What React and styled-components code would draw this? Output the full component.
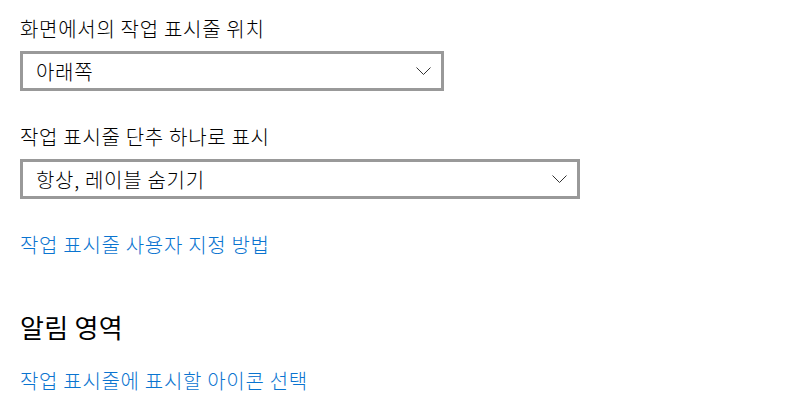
import React from 'react';
import { styled, createGlobalStyle } from 'styled-components';

const GlobalStyle = createGlobalStyle`
  html, body {
    margin: 0;
    padding: 0;
    background: #ffffff;
  }
  body {
    font-family: "Noto Sans CJK KR", "Noto Sans", sans-serif;
    color: #000000;
  }
`;

const Page = styled.div`
  width: 800px;
  height: 400px;
  box-sizing: border-box;
  padding: 19px 0 0 20px;
  display: flex;
  flex-direction: column;
  align-items: flex-start;
`;

const Label = styled.div`
  font-size: 20px;
  font-weight: 300;
  line-height: 20px;
  letter-spacing: 0.7px;
  margin-top: ${({ $top }) => $top || 0}px;
  margin-bottom: 12px;
`;

const Select = styled.div`
  box-sizing: border-box;
  width: ${({ $width }) => $width}px;
  height: 40px;
  border: 3px solid #999999;
  display: flex;
  align-items: center;
  justify-content: space-between;
  padding: 0 10px 0 13px;
  font-size: 20px;
  font-weight: 300;
  letter-spacing: 0.7px;
`;

const Chevron = () => (
  <svg width="15" height="8" viewBox="0 0 15 8" fill="none">
    <path d="M0.5 0.5 L7.5 7.5 L14.5 0.5" stroke="#333333" strokeWidth="1" />
  </svg>
);

const Link = styled.a`
  display: block;
  font-size: 20px;
  font-weight: 300;
  line-height: 20px;
  letter-spacing: 0.7px;
  color: #0a74d0;
  text-decoration: none;
  margin-top: ${({ $top }) => $top}px;
`;

const Heading = styled.h2`
  margin: 58px 0 0;
  font-size: 26px;
  font-weight: 400;
  line-height: 28px;
  letter-spacing: 0.3px;
`;

export default function App() {
  return (
    <>
      <GlobalStyle />
      <Page>
        <Label>화면에서의 작업 표시줄 위치</Label>
        <Select $width={424}>
          <span>아래쪽</span>
          <Chevron />
        </Select>
        <Label $top={36}>작업 표시줄 단추 하나로 표시</Label>
        <Select $width={560}>
          <span>항상, 레이블 숨기기</span>
          <Chevron />
        </Select>
        <Link href="#" $top={36}>작업 표시줄 사용자 지정 방법</Link>
        <Heading>알림 영역</Heading>
        <Link href="#" $top={30}>작업 표시줄에 표시할 아이콘 선택</Link>
      </Page>
    </>
  );
}
